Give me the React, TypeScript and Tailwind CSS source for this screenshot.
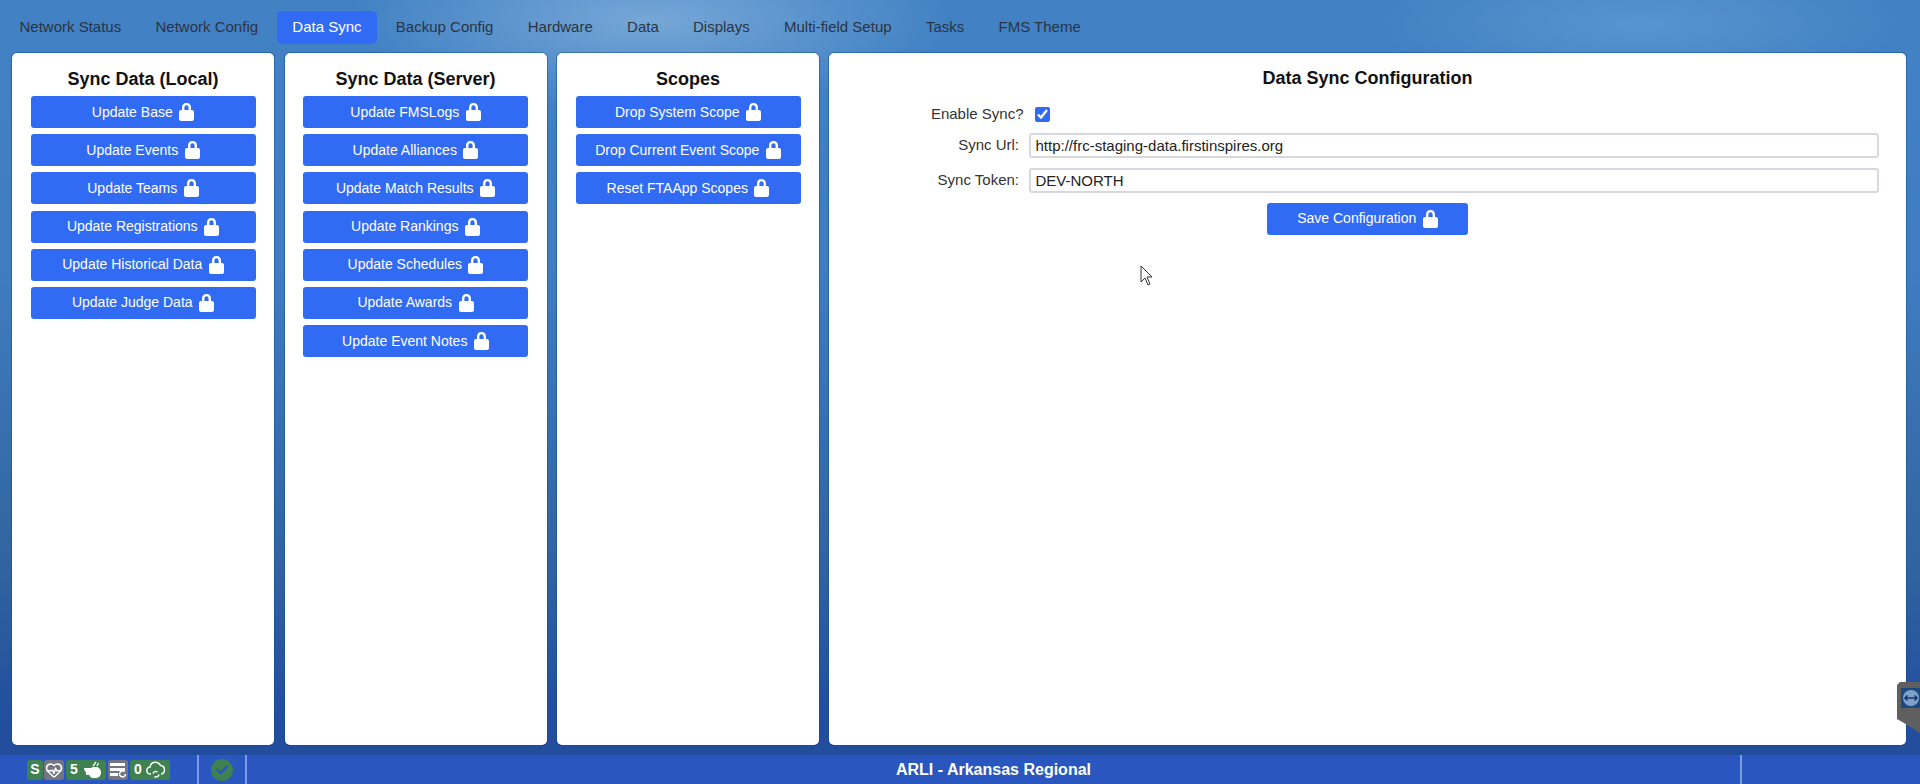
import { FaCheck } from 'react-icons/fa'
import { HeartPulse } from 'lucide-react'

const tabs = ['Network Status', 'Network Config', 'Data Sync', 'Backup Config', 'Hardware', 'Data', 'Displays', 'Multi-field Setup', 'Tasks', 'FMS Theme']

const local = ['Update Base', 'Update Events', 'Update Teams', 'Update Registrations', 'Update Historical Data', 'Update Judge Data']
const server = ['Update FMSLogs', 'Update Alliances', 'Update Match Results', 'Update Rankings', 'Update Schedules', 'Update Awards', 'Update Event Notes']
const scopes = ['Drop System Scope', 'Drop Current Event Scope', 'Reset FTAApp Scopes']

function LockIcon() {
  return (
    <svg width="15" height="18" viewBox="0 0 15 18" fill="#fff" className="shrink-0">
      <path
        fillRule="evenodd"
        d="M7.5 0C4.6 0 3 2 3 4.6V7H2C.9 7 0 7.9 0 9v7c0 1.1.9 2 2 2h11c1.1 0 2-.9 2-2V9c0-1.1-.9-2-2-2h-1V4.6C12 2 10.4 0 7.5 0zM5.4 7V4.7c0-1.4.8-2.4 2.1-2.4s2.1 1 2.1 2.4V7z"
      />
    </svg>
  )
}

function LockButton({ label, className }: { label: string; className?: string }) {
  return (
    <button className={`h-[32px] flex items-center justify-center gap-[6.5px] bg-[#316bf3] text-white text-[14px] rounded-[3px] shrink-0 ${className ?? ''}`}>
      {label}
      <LockIcon />
    </button>
  )
}

function Column({ title, items }: { title: string; items: string[] }) {
  return (
    <div className="w-[262px] shrink-0 bg-white rounded-[5px] shadow-[0_0_0_1px_rgba(10,70,150,0.45)] flex flex-col px-[18.5px]">
      <h2 className="text-[18px] font-bold text-[#111] text-center leading-[22px] mt-[15px] mb-[6px]">{title}</h2>
      <div className="flex flex-col gap-[6.2px]">
        {items.map((item) => (
          <LockButton key={item} label={item} />
        ))}
      </div>
    </div>
  )
}

function Field({ label, value }: { label: string; value: string }) {
  return (
    <div className="flex items-center h-[26px] mb-[9px]">
      <label className="w-[199.5px] text-right text-[15px] text-[#333] pr-[9.5px] shrink-0">{label}</label>
      <input
        readOnly
        defaultValue={value}
        className="flex-1 h-[25px] border-2 border-[#d5d8de] rounded-[3px] px-[5px] text-[15px] text-[#222] outline-none"
      />
    </div>
  )
}

export default function App() {
  return (
    <div className="relative h-[784px] w-[1920px] overflow-hidden flex flex-col font-['Liberation_Sans',Arial,sans-serif] bg-[radial-gradient(ellipse_300px_90px_at_650px_20px,rgba(170,205,235,0.5),transparent),radial-gradient(ellipse_260px_70px_at_1640px_25px,rgba(140,190,230,0.3),transparent),linear-gradient(180deg,#4282c4_0%,#3f7cc0_35%,#31649f_72%,#234f9e_90%,#214c9a_100%)]">
      <nav className="h-[53px] shrink-0 flex items-start gap-[3.3px] pt-[11px] pl-[4px]">
        {tabs.map((tab) => (
          <a
            key={tab}
            className={`h-[33px] flex items-center px-[15.5px] text-[15px] rounded-[5px] ${tab === 'Data Sync' ? 'bg-[#316bf3] text-white' : 'text-[#2a3442]'}`}
          >
            {tab}
          </a>
        ))}
      </nav>

      <main className="h-[692px] shrink-0 flex gap-[10.5px] pl-[12px]">
        <Column title="Sync Data (Local)" items={local} />
        <Column title="Sync Data (Server)" items={server} />
        <Column title="Scopes" items={scopes} />
        <div className="w-[1077px] shrink-0 -ml-[0.5px] bg-white rounded-[5px] shadow-[0_0_0_1px_rgba(10,70,150,0.45)] flex flex-col pr-[27px]">
          <h2 className="text-[18px] font-bold text-[#111] text-center leading-[22px] mt-[14px] mb-[12px] pl-[27px]">Data Sync Configuration</h2>
          <div className="flex items-center h-[26px] mb-[5.5px]">
            <label className="w-[205.5px] text-right text-[15px] text-[#333] pr-[11px] shrink-0">Enable Sync?</label>
            <input type="checkbox" readOnly defaultChecked className="w-[15px] h-[15px] accent-[#316bf3]" />
          </div>
          <Field label="Sync Url:" value="http://frc-staging-data.firstinspires.org" />
          <Field label="Sync Token:" value="DEV-NORTH" />
          <div className="flex justify-center pl-[27px]">
            <LockButton label="Save Configuration" className="w-[201px]" />
          </div>
        </div>
      </main>

      <footer className="absolute bottom-0 left-0 right-0 h-[29px] bg-[#2a56c0] flex items-center text-white">
        <div className="w-[197px] h-full flex items-center pl-[27px] shrink-0">
          <span className="w-[16px] h-[20px] rounded-[3px] bg-[#3f8150] flex items-center justify-center text-[14px] font-bold">S</span>
          <span className="ml-[1px] w-[20px] h-[20px] rounded-[3px] bg-[#737680] flex items-center justify-center">
            <HeartPulse className="w-[18px] h-[18px]" />
          </span>
          <span className="ml-[2px] w-[40px] h-[20px] rounded-[3px] bg-[#3f8150] flex items-center justify-between px-[4px] text-[14px] font-bold">
            5
            <svg width="18" height="17" viewBox="0 0 18 17" fill="#fff">
              <path d="M0 7h7l2-1h3c3 0 5 2.500 5 5.500S15 17 12 17H9c-2 0-3-1-3.500-3H3c-.8 0-1.200-.7-1.200-1.500 0-.4.1-.8.4-1.100C.8 10.500 0 9 0 7z" />
              <path d="M9 5l3-4M13 5l1.500-3" stroke="#fff" strokeWidth="1.300" fill="none" />
            </svg>
          </span>
          <span className="ml-[2px] w-[20px] h-[20px] rounded-[3px] bg-[#737680] flex items-center justify-center">
            <svg width="18" height="18" viewBox="0 0 18 18">
              <path d="M1 2h15v3H1zM1 7h15v3H1zM1 12h8v3H1z" fill="#fff" />
              <path d="M16.500 13a3 3 0 1 1-1-2.300" stroke="#fff" strokeWidth="1.500" fill="#737680" />
            </svg>
          </span>
          <span className="ml-[2px] w-[40px] h-[20px] rounded-[3px] bg-[#3f8150] flex items-center justify-between px-[4px] text-[14px] font-bold">
            0
            <svg width="20" height="18" viewBox="0 0 20 18" fill="none" stroke="#fff" strokeWidth="1.500">
              <path d="M5 13H4.500a3.500 3.500 0 0 1-.5-7 5.500 5.500 0 0 1 10.500-1.500A4.300 4.300 0 0 1 15 13" />
              <path d="M7 12.500a3 3 0 0 1 4.500-1.500M13 13.500a3 3 0 0 1-4.500 2" />
            </svg>
          </span>
        </div>
        <div className="w-[50px] h-full border-x-2 border-[#7d9be0] flex items-center justify-center shrink-0">
          <span className="w-[22px] h-[22px] rounded-full bg-[#3f8150] flex items-center justify-center">
            <FaCheck className="w-[12px] h-[12px] text-[#2a56c0]" />
          </span>
        </div>
        <div className="flex-1 text-center font-bold text-[16px]">ARLI - Arkansas Regional</div>
        <div className="w-[180px] h-full border-l-2 border-[#7d9be0] shrink-0"></div>
      </footer>

      <svg className="absolute left-[1140px] top-[265px]" width="14" height="21" viewBox="0 0 14 21">
        <path d="M1 1v16l4-4 3 7 2-1-3-7h5z" fill="#fff" stroke="#333" strokeWidth="1" />
      </svg>

      <svg className="absolute left-[1897px] top-[682px]" width="23" height="51" viewBox="0 0 23 51">
        <path d="M3 0H23V51L7 41 0 37V3z" fill="#5f5f5f" />
        <rect x="4" y="6" width="19" height="20" fill="#1c4a80" />
        <circle cx="14" cy="16" r="8" fill="#7fa0c8" />
        <path d="M8 16h12M10.500 13.500L8 16l2.500 2.500M17.500 13.500L20 16l-2.500 2.500" stroke="#16386a" strokeWidth="1.600" fill="none" />
      </svg>
    </div>
  )
}
